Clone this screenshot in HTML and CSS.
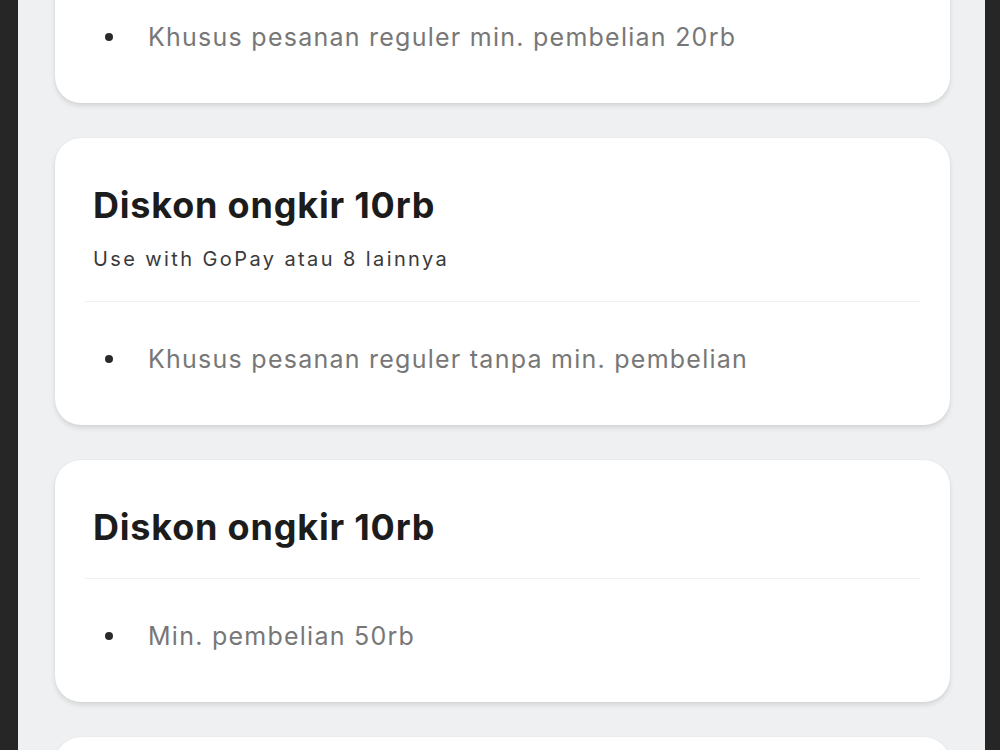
FILE: index.html
```html
<!DOCTYPE html>
<html lang="id">
<head>
<meta charset="utf-8">
<title>Voucher</title>
<link rel="stylesheet" href="styles.css">
</head>
<body>
<div class="frame">
  <div class="screen">
    <div class="list">
      <div class="card">
        <div class="card-head">
          <div class="title">Diskon ongkir 20rb</div>
          <div class="sub">Use with GoPay atau 8 lainnya</div>
        </div>
        <ul class="card-body">
          <li>Khusus pesanan reguler min. pembelian 20rb</li>
        </ul>
      </div>
      <div class="card">
        <div class="card-head">
          <div class="title">Diskon ongkir 10rb</div>
          <div class="sub">Use with GoPay atau 8 lainnya</div>
        </div>
        <ul class="card-body">
          <li>Khusus pesanan reguler tanpa min. pembelian</li>
        </ul>
      </div>
      <div class="card">
        <div class="card-head">
          <div class="title">Diskon ongkir 10rb</div>
        </div>
        <ul class="card-body">
          <li>Min. pembelian 50rb</li>
        </ul>
      </div>
      <div class="card">
        <div class="card-head">
          <div class="title">Diskon ongkir 5rb</div>
        </div>
        <ul class="card-body">
          <li>Min. pembelian 30rb</li>
        </ul>
      </div>
    </div>
  </div>
</div>
</body>
</html>
```
FILE: styles.css
```css
html, body {
  margin: 0;
  padding: 0;
  background: #262626;
  overflow: hidden;
}
body {
  font-family: Inter, "Noto Sans", sans-serif;
}
.frame {
  width: 1000px;
  height: 750px;
  display: flex;
  padding-left: 18px;
  box-sizing: border-box;
}
.screen {
  width: 967px;
  height: 750px;
  background: #eff0f1;
  overflow: hidden;
}
.list {
  display: flex;
  flex-direction: column;
  gap: 35px;
  padding: 0 35px 0 37px;
  margin-top: -184px;
}
.card {
  background: #fff;
  border-radius: 26px;
  box-shadow: 0 3px 5px rgba(0, 0, 0, 0.11), 0 0 2px rgba(0, 0, 0, 0.05);
}
.card-head {
  padding: 47px 8px 31px;
  margin: 0 30px;
  border-bottom: 1px solid #f1f1f1;
}
.card-head:has(.sub) {
  padding-bottom: 30px;
}
.title {
  font-size: 36px;
  font-weight: 700;
  line-height: 40px;
  color: #1c1c1c;
  letter-spacing: 0.8px;
}
.sub {
  margin-top: 22px;
  font-size: 20px;
  line-height: 24px;
  color: #3a3a3a;
  letter-spacing: 2.4px;
}
.card-body {
  list-style: none;
  margin: 0;
  padding: 43px 0 52px 50px;
}
.card-body li {
  display: flex;
  align-items: center;
  gap: 35px;
  font-size: 25px;
  line-height: 28px;
  color: #777;
  letter-spacing: 1.25px;
}
.card-body li::before {
  content: "";
  width: 8px;
  height: 8px;
  border-radius: 50%;
  background: #2a2a2a;
  flex: none;
}
```
